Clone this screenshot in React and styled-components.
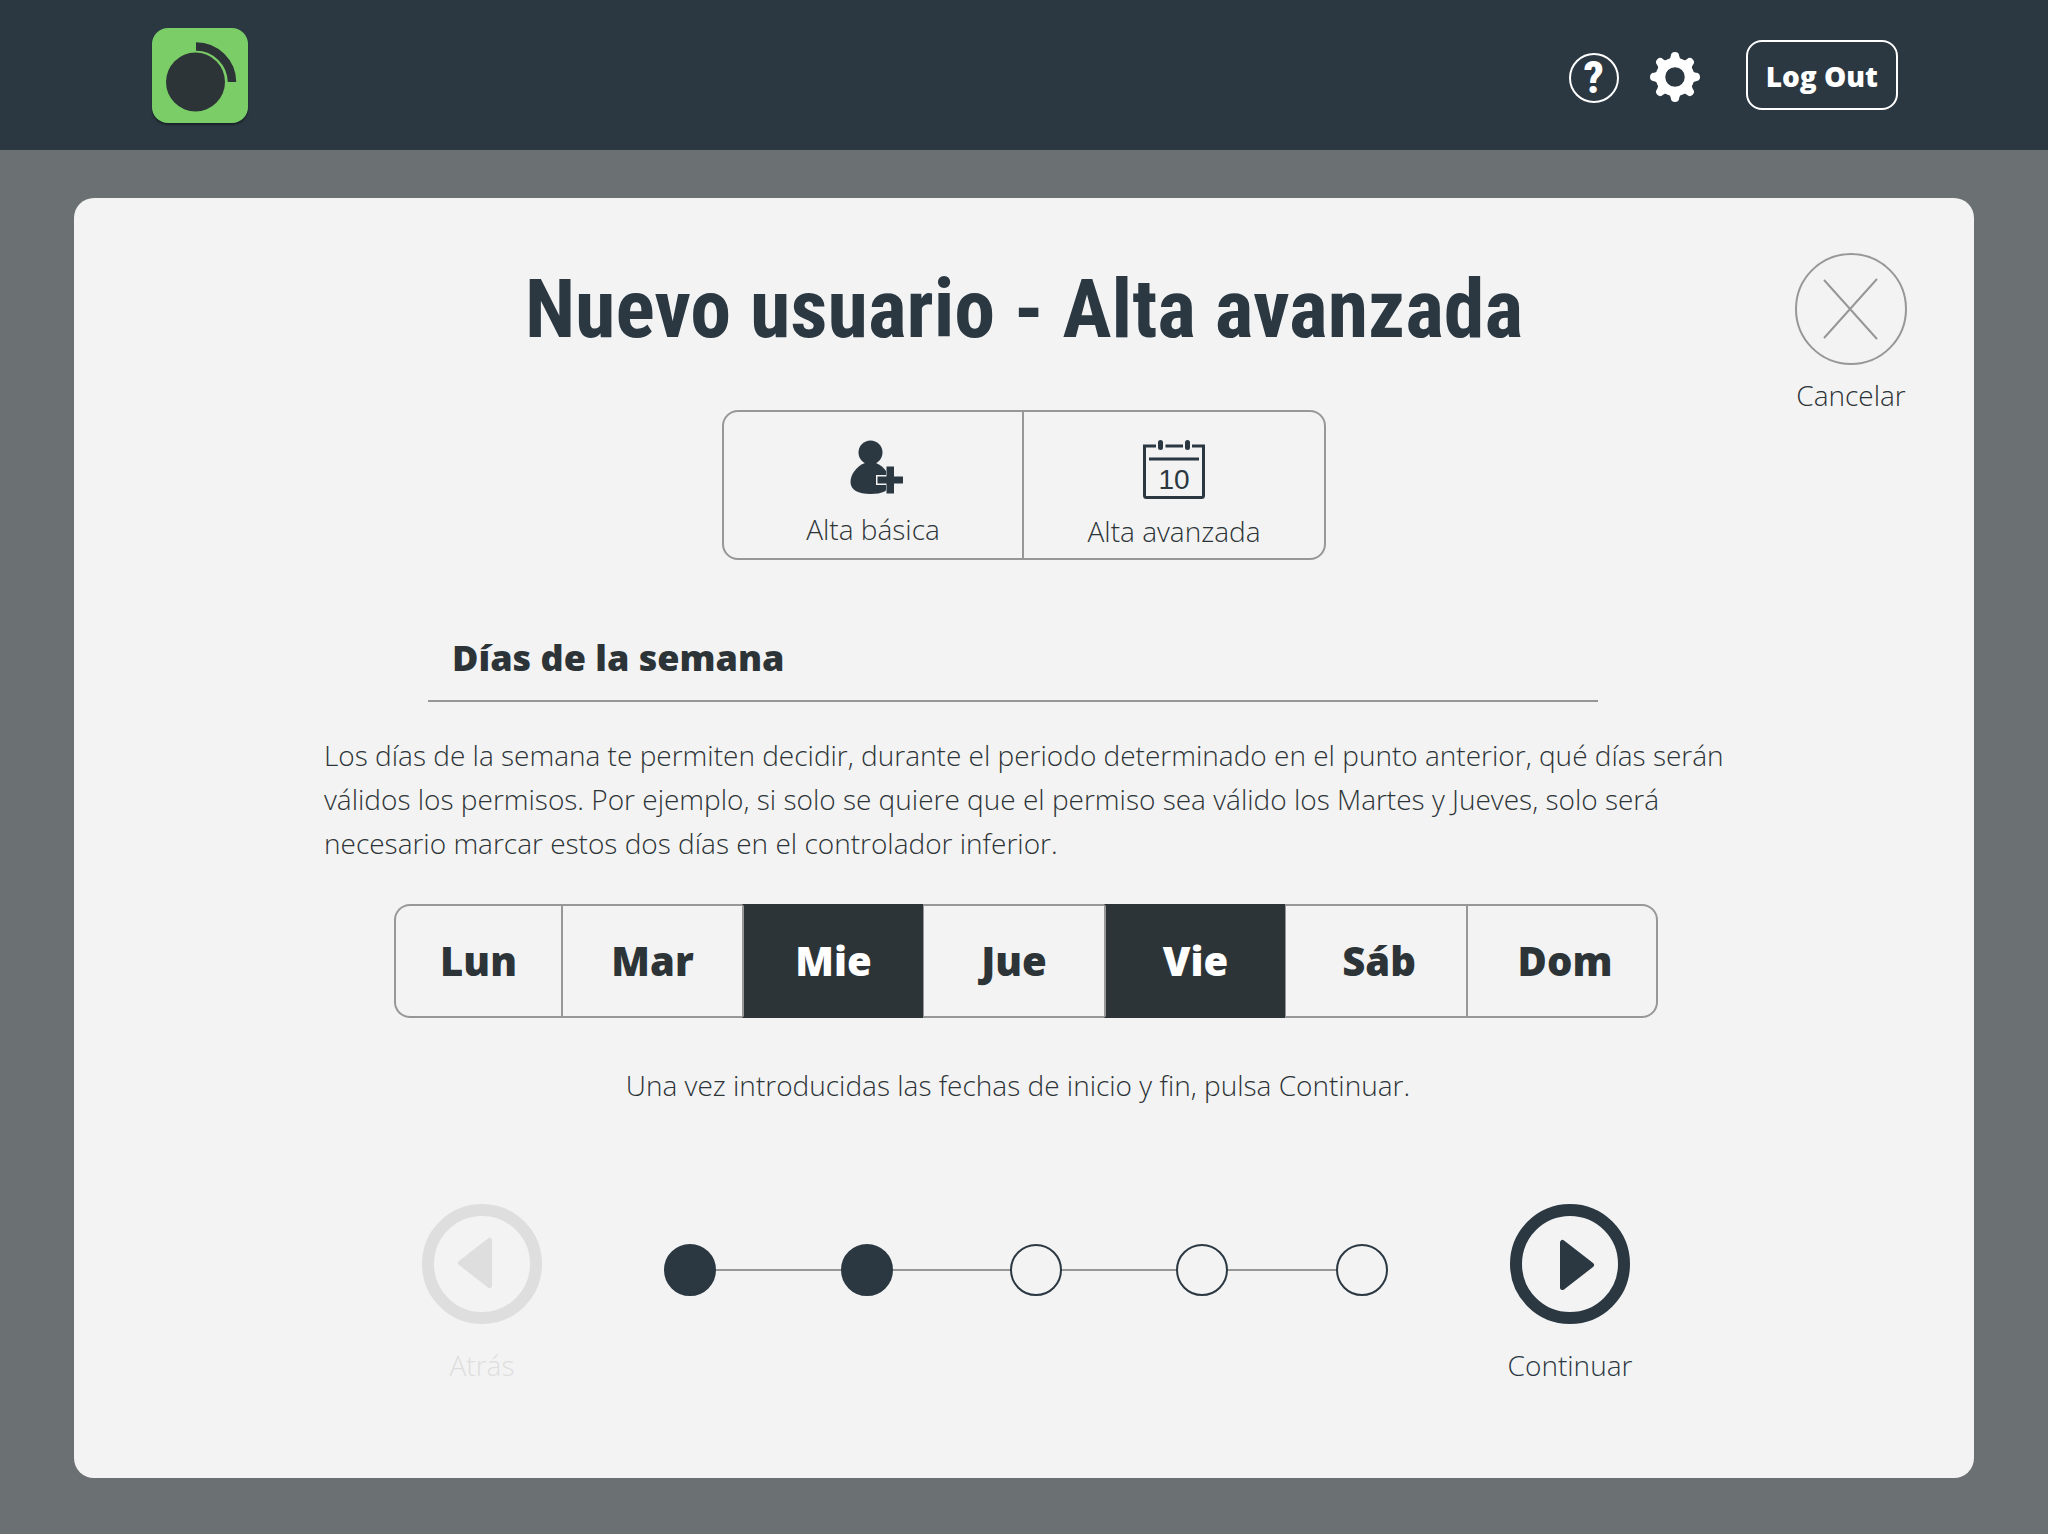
import React, { useState } from "react";
import styled, { createGlobalStyle } from "styled-components";

const navy = "#2b3842";
const ink = "#2d3437";
const paper = "#f3f3f3";
const line = "#979797";
const muted = "#dedede";

const GlobalStyle = createGlobalStyle`
  *, *::before, *::after { box-sizing: border-box; }
  body {
    margin: 0;
    background: #ffffff;
    color: ${ink};
    font-family: "Open Sans", "Noto Sans", sans-serif;
    font-size: 28px;
    font-weight: 300;
    line-height: 40px;
  }
  button {
    margin: 0;
    padding: 0;
    border: 0;
    background: none;
    color: inherit;
    font: inherit;
    cursor: pointer;
  }
  h1, h2, p, ol { margin: 0; padding: 0; }
  svg { display: block; flex: none; }
`;

const TopBar = styled.header`
  display: flex;
  align-items: center;
  justify-content: space-between;
  height: 150px;
  padding: 0 150px 0 152px;
  background: ${navy};
`;

const Logo = styled.a`
  display: block;
  border-radius: 16px;
  box-shadow: 0 2px 2px rgba(0, 0, 0, 0.4);
`;

const Actions = styled.div`
  display: flex;
  align-items: center;
  color: #ffffff;
`;

const HelpButton = styled.button`
  width: 50px;
  height: 50px;
  margin: 6px 31px 0 0;
  border: 2px solid currentColor;
  border-radius: 50%;
  font-family: "Roboto Condensed", Roboto, sans-serif;
  font-size: 45px;
  font-weight: 800;
  line-height: 46px;
`;

const SettingsButton = styled.button`
  margin: 4px 46px 0 0;
`;

const LogOutButton = styled.button`
  height: 70px;
  padding: 2px 18px 0;
  border: 2px solid currentColor;
  border-radius: 16px;
  font-weight: 800;
`;

const Backdrop = styled.main`
  padding: 48px 74px 56px;
  background: #6b7073;
`;

const Card = styled.section`
  padding: 55px 67px 93px;
  border-radius: 20px;
  background: ${paper};
`;

const CardHead = styled.div`
  display: grid;
  grid-template-columns: 1fr auto 1fr;
  row-gap: 45px;
  justify-items: center;
`;

const Title = styled.h1`
  grid-column: 2;
  color: ${navy};
  font-family: "Roboto Condensed", Roboto, sans-serif;
  font-size: 82px;
  font-weight: 700;
  line-height: 112px;
`;

const CancelButton = styled.button`
  display: flex;
  grid-column: 3;
  grid-row: 1 / 3;
  flex-direction: column;
  align-items: center;
  align-self: start;
  justify-self: end;
  gap: 10px;
`;

const ModeSwitch = styled.div`
  display: grid;
  grid-column: 2;
  grid-template-columns: 298fr 302fr;
  width: 604px;
  height: 150px;
  border: 2px solid ${line};
  border-radius: 16px;
`;

const ModeButton = styled.button`
  display: flex;
  flex-direction: column;
  align-items: center;
  gap: 11px;
  padding-top: 28px;

  & + & {
    border-left: 2px solid ${line};
  }
`;

const Body = styled.div`
  display: flex;
  flex-direction: column;
  align-items: center;
  max-width: 1408px;
  margin: 72px auto 0;
  padding-left: 4px;
`;

const SectionTitle = styled.h2`
  align-self: stretch;
  margin: 0 130px 31px 104px;
  padding: 0 24px 16px;
  border-bottom: 2px solid ${line};
  font-size: 36px;
  font-weight: 800;
  line-height: 52px;
`;

const Text = styled.p`
  line-height: 44px;
`;

const Hint = styled(Text)`
  padding-right: 16px;
`;

const Days = styled.div`
  display: grid;
  grid-template-columns: 167fr repeat(5, 181fr) 192fr;
  width: 100%;
  max-width: 1264px;
  height: 114px;
  margin: 39px 0 45px;
`;

const DayButton = styled.button`
  border: solid ${(p) => (p.$on ? ink : line)};
  border-width: 2px 0 2px 2px;
  border-left-color: ${line};
  background: ${(p) => (p.$on ? ink : "transparent")};
  color: ${(p) => (p.$on ? "#ffffff" : ink)};
  font-size: 40px;
  font-weight: 800;

  &:first-child {
    border-radius: 16px 0 0 16px;
  }
  &:nth-child(n + 6) {
    padding-left: 6px;
  }
  &:last-child {
    border-right-width: 2px;
    border-radius: 0 16px 16px 0;
  }
  &[aria-pressed="true"] + & {
    border-left-width: 1px;
  }
`;

const Wizard = styled.nav`
  display: flex;
  align-items: flex-start;
  width: 100%;
  max-width: 1216px;
  margin-top: 97px;
`;

const StepButton = styled.button`
  display: flex;
  flex: 0 0 128px;
  flex-direction: column;
  align-items: center;
  gap: 21px;
  color: ${navy};

  &:disabled {
    color: ${muted};
    cursor: default;
  }
`;

const Progress = styled.ol`
  display: flex;
  flex: 1;
  align-items: center;
  margin: 40px 118px 0;
  list-style: none;
`;

const Step = styled.li`
  display: flex;
  flex: ${(p) => p.$span} 1 0;
  align-items: center;

  &:last-child {
    flex: none;
  }
  &:not(:last-child)::after {
    flex: 1;
    height: 2px;
    background: ${line};
    content: "";
  }
`;

const Dot = styled.span`
  width: 52px;
  height: 52px;
  border: 2px solid ${navy};
  border-radius: 50%;
  background: ${(p) => (p.$done ? navy : "transparent")};
`;

const LogoMark = () => (
  <svg width="96" height="95" viewBox="0 0 96 95" aria-hidden="true">
    <rect width="96" height="95" rx="16" fill="#7acd67" />
    <circle cx="43.5" cy="54" r="29.5" fill={ink} />
    <path d="M44 18.500A36 36 0 0 1 80 54" fill="none" stroke={ink} strokeWidth="8.500" />
  </svg>
);

const GearIcon = () => (
  <svg width="50" height="50" viewBox="-25 -25 50 50" aria-hidden="true">
    <circle r="14.500" fill="none" stroke="#fff" strokeWidth="9.500" />
    {[0, 45, 90, 135, 180, 225, 270, 315].map((angle) => (
      <path
        key={angle}
        transform={`rotate(${angle})`}
        d="M-7-17Q-4.500-18-4.200-21Q-4-25 0-25Q4-25 4.200-21Q4.500-18 7-17L0-12Z"
        fill="#fff"
      />
    ))}
  </svg>
);

const UserPlusIcon = () => (
  <svg width="60" height="58" viewBox="0 0 60 58" aria-hidden="true">
    <g fill={navy}>
      <circle cx="27.500" cy="12.500" r="12" />
      <path d="M22 23H33C41 26 47 35 47 42C47 51 39 54 27.500 54C15 54 7.500 50 7.500 42C7.500 34 14 26 22 23Z" />
    </g>
    <path d="M33 35H43V26H51V58H43V45H33Z" fill={paper} />
    <path d="M43.500 26.500H51V36.500H61.500V43.500H51V53.500H43.500V43.500H34.500V36.500H43.500Z" fill={navy} />
  </svg>
);

const CalendarIcon = () => (
  <svg width="62" height="60" viewBox="0 0 62 60" aria-hidden="true">
    <g fill="none" stroke={navy} strokeWidth="3">
      <path d="M13 6H1.500V55.500Q1.500 57.500 3.500 57.500H58.500Q60.500 57.500 60.500 55.500V6H49M22.500 6H40" />
      <path d="M6 19H56" />
      <path d="M17.500 2.500V7.500M44.500 2.500V7.500" strokeWidth="5" strokeLinecap="round" />
    </g>
    <text
      x="31"
      y="49"
      textAnchor="middle"
      fontFamily="'Liberation Sans', Arial, sans-serif"
      fontSize="28"
      fontWeight="400"
      fill={navy}
    >
      10
    </text>
  </svg>
);

const CancelIcon = () => (
  <svg width="112" height="112" viewBox="0 0 112 112" aria-hidden="true">
    <g fill="none" stroke={line} strokeWidth="2" strokeLinecap="round">
      <circle cx="56" cy="56" r="55" />
      <path d="M29.500 27.500L81.500 85.500M81.500 26.500L29.500 84.500" />
    </g>
  </svg>
);

const ArrowIcon = ({ back }) => (
  <svg width="120" height="120" viewBox="0 0 120 120" aria-hidden="true">
    <circle cx="60" cy="60" r="54" fill="none" stroke="currentColor" strokeWidth="12" />
    <path
      d={back ? "M67.500 36.500V81.500L38.500 59Z" : "M52.500 38.500V83.500L81.500 61Z"}
      fill="currentColor"
      stroke="currentColor"
      strokeWidth="5"
      strokeLinejoin="round"
    />
  </svg>
);

const dayNames = ["Lun", "Mar", "Mie", "Jue", "Vie", "Sáb", "Dom"];

const steps = [
  { span: 177, done: true },
  { span: 170, done: true },
  { span: 166, done: false },
  { span: 160, done: false },
  { span: 0, done: false },
];

export default function App() {
  const [selected, setSelected] = useState(["Mie", "Vie"]);
  const toggle = (day) =>
    setSelected((days) => (days.includes(day) ? days.filter((d) => d !== day) : [...days, day]));

  return (
    <>
      <GlobalStyle />
      <TopBar>
        <Logo href="#" aria-label="Inicio">
          <LogoMark />
        </Logo>
        <Actions>
          <HelpButton type="button">?</HelpButton>
          <SettingsButton type="button" aria-label="Ajustes">
            <GearIcon />
          </SettingsButton>
          <LogOutButton type="button">Log Out</LogOutButton>
        </Actions>
      </TopBar>
      <Backdrop>
        <Card>
          <CardHead>
            <Title>Nuevo usuario - Alta avanzada</Title>
            <ModeSwitch>
              <ModeButton type="button">
                <UserPlusIcon />
                Alta básica
              </ModeButton>
              <ModeButton type="button">
                <CalendarIcon />
                Alta avanzada
              </ModeButton>
            </ModeSwitch>
            <CancelButton type="button">
              <CancelIcon />
              Cancelar
            </CancelButton>
          </CardHead>
          <Body>
            <SectionTitle>Días de la semana</SectionTitle>
            <Text>
              Los días de la semana te permiten decidir, durante el periodo determinado en el punto
              anterior, qué días serán válidos los permisos. Por ejemplo, si solo se quiere que el
              permiso sea válido los Martes y Jueves, solo será necesario marcar estos dos días en
              el controlador inferior.
            </Text>
            <Days role="group" aria-label="Días de la semana">
              {dayNames.map((day) => (
                <DayButton
                  key={day}
                  type="button"
                  $on={selected.includes(day)}
                  aria-pressed={selected.includes(day)}
                  onClick={() => toggle(day)}
                >
                  {day}
                </DayButton>
              ))}
            </Days>
            <Hint>Una vez introducidas las fechas de inicio y fin, pulsa Continuar.</Hint>
            <Wizard aria-label="Pasos">
              <StepButton type="button" disabled>
                <ArrowIcon back />
                Atrás
              </StepButton>
              <Progress>
                {steps.map((step, i) => (
                  <Step key={i} $span={step.span}>
                    <Dot $done={step.done} />
                  </Step>
                ))}
              </Progress>
              <StepButton type="button">
                <ArrowIcon />
                Continuar
              </StepButton>
            </Wizard>
          </Body>
        </Card>
      </Backdrop>
    </>
  );
}
